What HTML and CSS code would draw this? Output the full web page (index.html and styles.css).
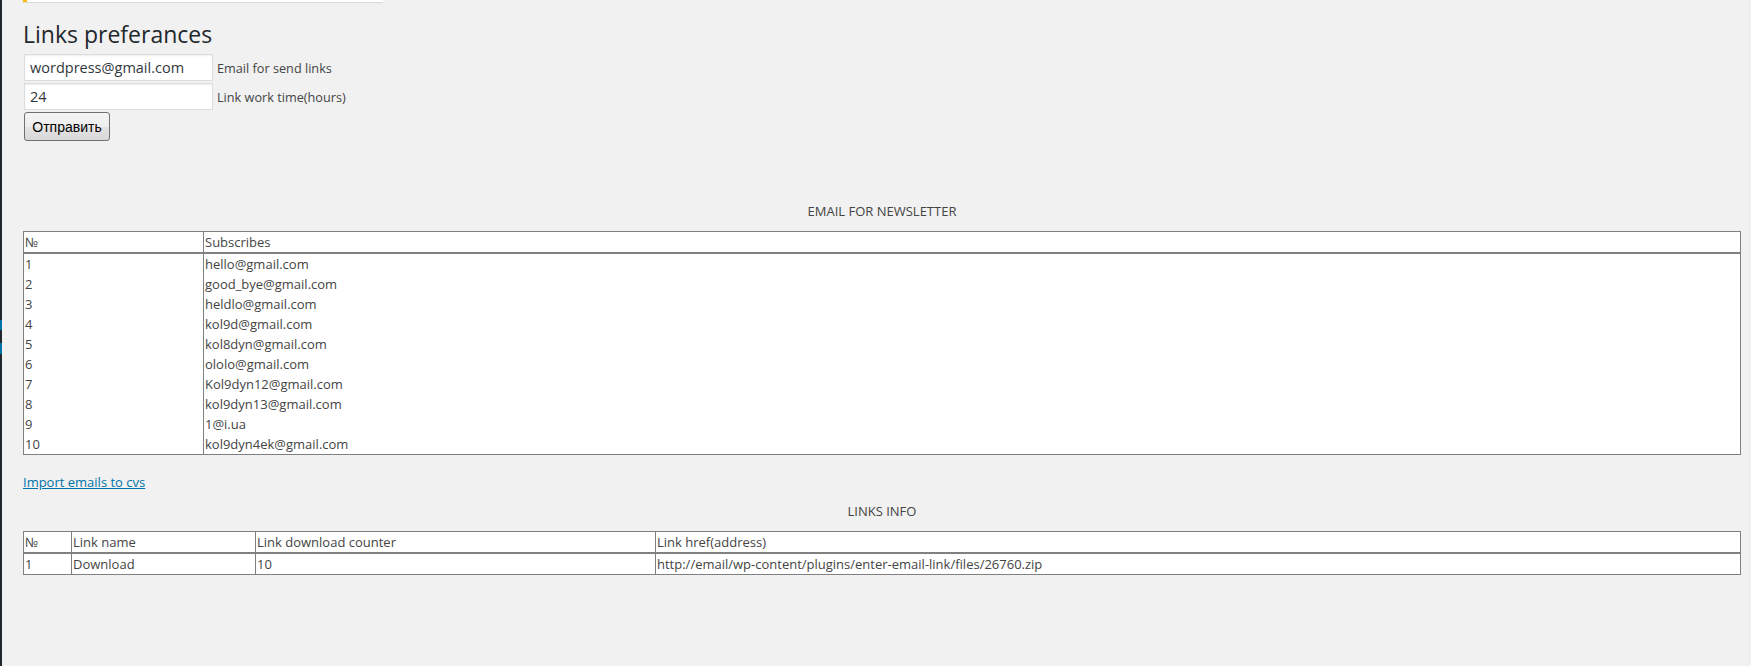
FILE: index.html
```html
<!DOCTYPE html>
<html lang="en">
<head>
    <meta charset="UTF-8">
    <title>Links preferances</title>
    <link rel="stylesheet" href="styles.css">
</head>
<body>
    <div class="layout">
        <div class="admin-edge">
            <span class="edge-mark first"></span>
            <span class="edge-mark second"></span>
        </div>

        <div class="content">
            <div class="notice"></div>

            <div class="wrap">
                <h1>Links preferances</h1>

                <form class="prefs-form" onsubmit="return false;">
                    <div class="form-row">
                        <input type="text" class="field" value="wordpress@gmail.com">
                        <label>Email for send links</label>
                    </div>
                    <div class="form-row">
                        <input type="text" class="field" value="24">
                        <label>Link work time(hours)</label>
                    </div>
                    <button type="submit" class="send-button">Отправить</button>
                </form>

                <!-- Subscribers -->
                <div class="table-title">EMAIL FOR NEWSLETTER</div>
                <table class="data-table subscribers">
                    <thead>
                        <tr>
                            <th class="col-num">№</th>
                            <th>Subscribes</th>
                        </tr>
                    </thead>
                    <tbody>
                        <tr><td>1</td><td>hello@gmail.com</td></tr>
                        <tr><td>2</td><td>good_bye@gmail.com</td></tr>
                        <tr><td>3</td><td>heldlo@gmail.com</td></tr>
                        <tr><td>4</td><td>kol9d@gmail.com</td></tr>
                        <tr><td>5</td><td>kol8dyn@gmail.com</td></tr>
                        <tr><td>6</td><td>ololo@gmail.com</td></tr>
                        <tr><td>7</td><td>Kol9dyn12@gmail.com</td></tr>
                        <tr><td>8</td><td>kol9dyn13@gmail.com</td></tr>
                        <tr><td>9</td><td>1@i.ua</td></tr>
                        <tr><td>10</td><td>kol9dyn4ek@gmail.com</td></tr>
                    </tbody>
                </table>

                <p class="import-link"><a href="#">Import emails to cvs</a></p>

                <!-- Links -->
                <div class="table-title links-title">LINKS INFO</div>
                <table class="data-table links">
                    <thead>
                        <tr>
                            <th class="col-num">№</th>
                            <th class="col-name">Link name</th>
                            <th class="col-counter">Link download counter</th>
                            <th>Link href(address)</th>
                        </tr>
                    </thead>
                    <tbody>
                        <tr>
                            <td>1</td>
                            <td>Download</td>
                            <td>10</td>
                            <td>http://email/wp-content/plugins/enter-email-link/files/26760.zip</td>
                        </tr>
                    </tbody>
                </table>
            </div>
        </div>
    </div>
</body>
</html>
```

FILE: styles.css
```css
body {
    margin: 0;
    padding: 0;
    background-color: #f1f1f1;
    color: #444;
    font-family: "Open Sans", sans-serif;
    font-size: 13px;
    line-height: 20px;
}

.layout {
    display: flex;
    min-height: 100vh;
}

.admin-edge {
    width: 2px;
    flex-shrink: 0;
    display: flex;
    flex-direction: column;
    background-color: #23282d;
}

.edge-mark {
    display: block;
    background-color: #0073aa;
}

.edge-mark.first {
    margin-top: 320px;
    height: 10px;
}

.edge-mark.second {
    margin-top: 13px;
    height: 11px;
}

.content {
    flex: 1;
    padding: 0 10px 0 21px;
}

.notice {
    width: 356px;
    height: 2px;
    background-color: #fff;
    border-left: 4px solid #ffb900;
    box-shadow: 0 1px 1px rgba(0, 0, 0, 0.1);
}

h1 {
    margin: 18px 0 4px;
    font-size: 23px;
    font-weight: 400;
    line-height: 29px;
    color: #23282d;
}

.form-row {
    display: flex;
    align-items: center;
    gap: 3px;
}

.field {
    width: 189px;
    height: 27px;
    margin: 1px;
    padding: 0 5px;
    box-sizing: border-box;
    border: 1px solid #ddd;
    box-shadow: inset 0 1px 2px rgba(0, 0, 0, 0.07);
    background-color: #fff;
    color: #32373c;
    font-family: "Open Sans", sans-serif;
    font-size: 14.5px;
    outline: none;
}

.form-row label {
    color: #444;
    font-size: 12.7px;
}

.send-button {
    display: block;
    width: 86px;
    height: 29px;
    margin: 1px;
    padding: 0;
    border: 1px solid #707070;
    border-radius: 3px;
    background: linear-gradient(#f4f4f4 0%, #eeeeee 50%, #e3e3e3 51%, #d8d8d8 100%);
    color: #000;
    font-family: "Liberation Sans", Arial, sans-serif;
    font-size: 14px;
    cursor: pointer;
}

.table-title {
    margin: 60px 0 10px;
    text-align: center;
    color: #444;
}

.links-title {
    margin-top: 9px;
}

.data-table {
    width: 100%;
    table-layout: fixed;
    border-collapse: separate;
    border-spacing: 0;
    border: 1px solid #808080;
    background-color: #fff;
}

.data-table th,
.data-table td {
    box-sizing: border-box;
    height: 20px;
    padding: 0 1px;
    text-align: left;
    font-weight: 400;
    line-height: 20px;
    color: #444;
    white-space: nowrap;
}

.data-table th {
    height: 22px;
    border-bottom: 2px solid #808080;
}

.data-table th + th,
.data-table td + td {
    border-left: 1px solid #808080;
}

.subscribers .col-num {
    width: 179px;
}

.links .col-num {
    width: 47px;
}

.links .col-name {
    width: 184px;
}

.links .col-counter {
    width: 400px;
}

.import-link {
    margin: 17px 0 0;
}

.import-link a {
    color: #0073aa;
}
```
